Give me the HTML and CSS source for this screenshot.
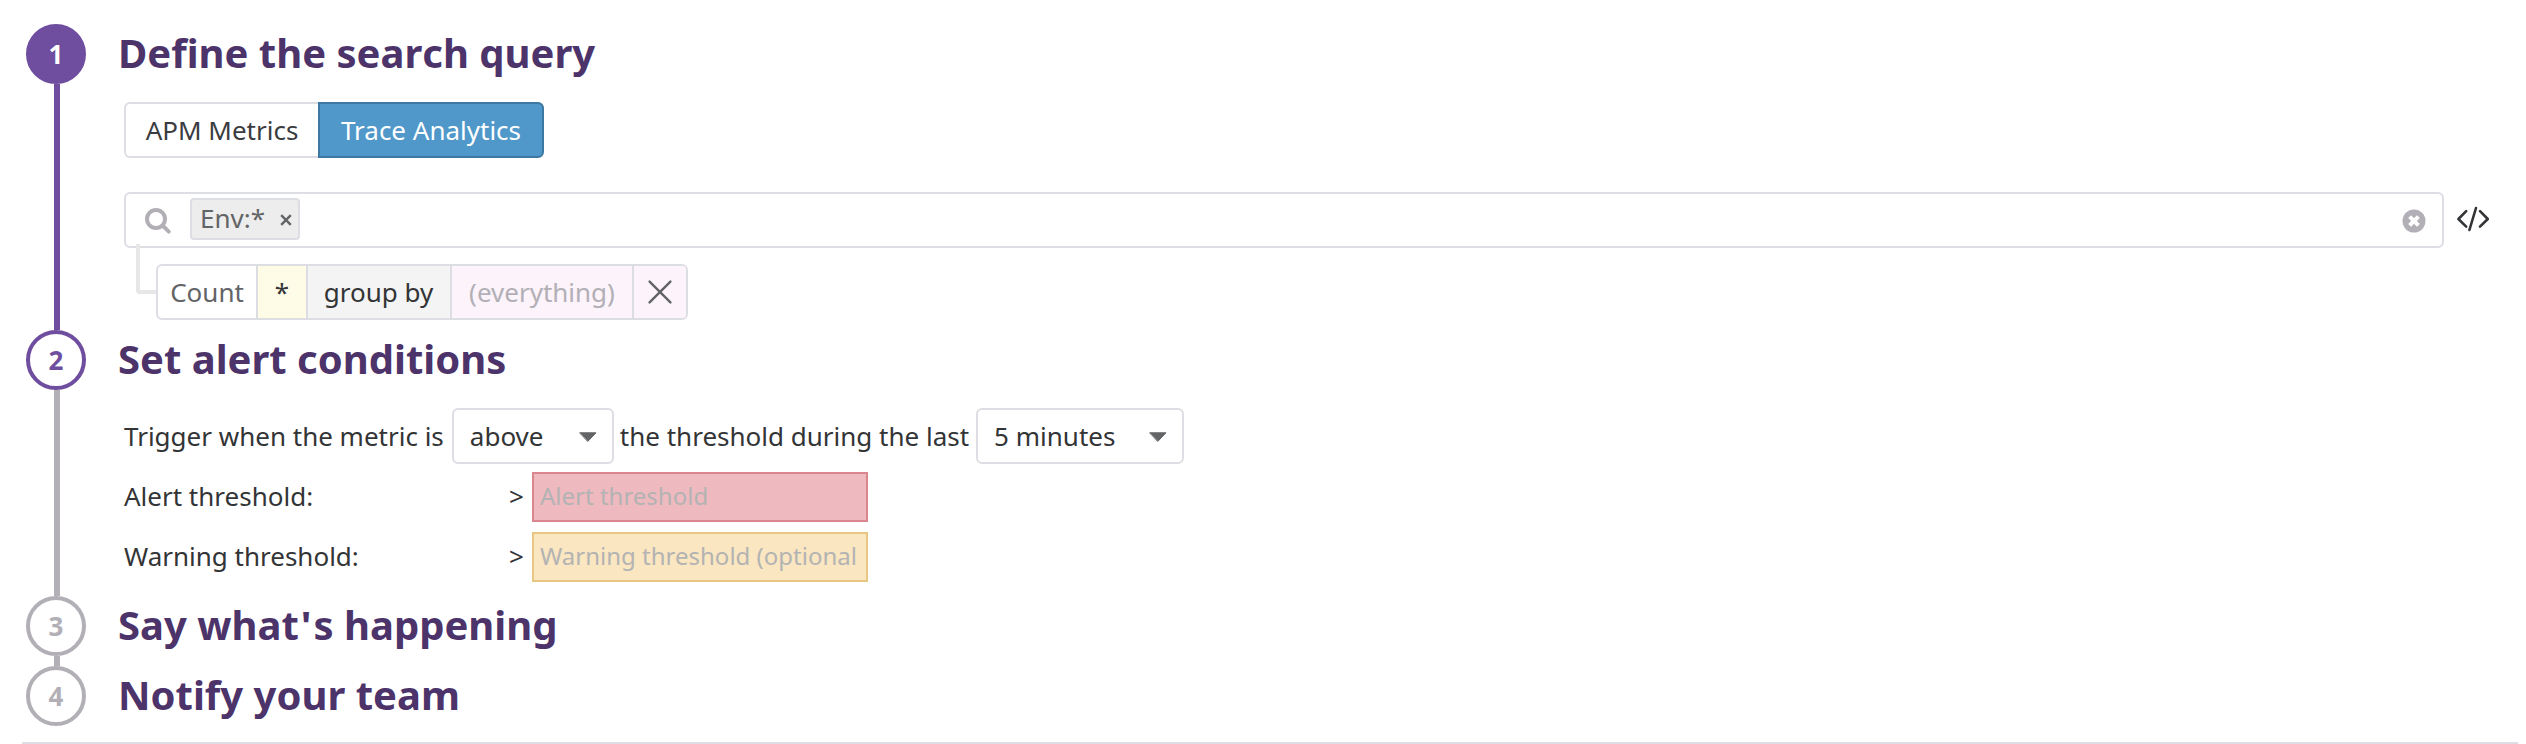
FILE: index.html
```html
<!DOCTYPE html>
<html lang="en">
<head>
<meta charset="utf-8">
<title>New monitor</title>
<link rel="stylesheet" href="styles.css">
</head>
<body>
<main class="monitor-form">
  <section class="step step-query">
    <div class="rail rail-active"><span class="badge badge-filled">1</span></div>
    <div class="content">
      <h2 class="title">Define the search query</h2>
      <div class="tabs">
        <button class="tab">APM Metrics</button>
        <button class="tab tab-selected">Trace Analytics</button>
      </div>
      <div class="search-row">
        <div class="search-box">
          <svg class="search-icon" width="28" height="28" viewBox="0 0 28 28"><circle cx="12" cy="12" r="9"/><path d="M18.8 18.8 24.8 24.6"/></svg>
          <span class="tag"><span class="tag-text">Env:*</span><svg width="12" height="12" viewBox="0 0 12 12"><path d="M1.2 1.2 10.8 10.8M10.8 1.2 1.2 10.8"/></svg></span>
          <svg class="clear-icon" width="24" height="24" viewBox="0 0 24 24"><circle cx="12" cy="12" r="11.5"/><path d="M7.6 7.6 16.4 16.4M16.4 7.6 7.6 16.4"/></svg>
        </div>
        <svg class="code-icon" width="34" height="26" viewBox="0 0 34 26"><path d="M10.2 5.2 2.4 13 10.2 20.6M24 5.2 31.8 13 24 20.6M20 2 13.4 24"/></svg>
      </div>
      <div class="group-row">
        <span class="connector"></span>
        <div class="group-box">
          <span class="cell cell-count">Count</span>
          <span class="cell cell-star">*</span>
          <span class="cell cell-by">group by</span>
          <span class="cell cell-facet">(everything)</span>
          <span class="cell cell-remove"><svg width="24" height="24" viewBox="0 0 24 24"><path d="M1.6 1.6 22.4 22.4M22.4 1.6 1.6 22.4"/></svg></span>
        </div>
      </div>
    </div>
  </section>
  <section class="step step-conditions">
    <div class="rail"><span class="badge badge-active">2</span></div>
    <div class="content">
      <h2 class="title">Set alert conditions</h2>
      <div class="trigger-row">
        <span>Trigger when the metric is</span>
        <span class="select select-operator">above<svg width="18" height="10" viewBox="0 0 18 10"><path d="M1 .8H17L9 9.2Z"/></svg></span>
        <span>the threshold during the last</span>
        <span class="select select-window">5 minutes<svg width="18" height="10" viewBox="0 0 18 10"><path d="M1 .8H17L9 9.2Z"/></svg></span>
      </div>
      <div class="threshold-row">
        <label class="threshold-label" for="alert">Alert threshold:</label>
        <span class="operator">&gt;</span>
        <input class="threshold threshold-alert" id="alert" placeholder="Alert threshold">
      </div>
      <div class="threshold-row">
        <label class="threshold-label" for="warning">Warning threshold:</label>
        <span class="operator">&gt;</span>
        <input class="threshold threshold-warning" id="warning" placeholder="Warning threshold (optional)">
      </div>
    </div>
  </section>
  <section class="step step-message">
    <div class="rail"><span class="badge">3</span></div>
    <div class="content"><h2 class="title">Say what<span class="apostrophe">'</span>s happening</h2></div>
  </section>
  <section class="step step-notify">
    <div class="rail rail-last"><span class="badge">4</span></div>
    <div class="content"><h2 class="title">Notify your team</h2></div>
  </section>
</main>
</body>
</html>
```
FILE: styles.css
```css
* { box-sizing: border-box; }
body {
  margin: 0;
  background: #fff;
  color: #333436;
  font: 26px/36px "Noto Sans", sans-serif;
}
svg { display: block; flex: none; fill: none; stroke-linecap: round; stroke-linejoin: round; }
.monitor-form {
  height: 744px;
  margin: 0 8px 0 22px;
  padding-top: 24px;
  border-bottom: 2px solid #dddde4;
}
.step { display: flex; padding-left: 4px; }
.step-query { height: 306px; }
.step-conditions { height: 266px; }
.step-message { height: 70px; }
.step-notify { height: 60px; }
.rail { width: 60px; display: flex; flex-direction: column; }
.rail::after { content: ""; width: 6px; margin-left: 28px; flex: 1; background: #b2b0b6; }
.rail-active::after { background: #704e9f; }
.rail-last::after { display: none; }
.badge {
  width: 60px;
  height: 60px;
  flex: none;
  border: 4px solid #b2b0b6;
  border-radius: 50%;
  color: #b2b0b6;
  font-weight: 700;
  line-height: 52px;
  text-align: center;
}
.badge-active { border-color: #704e9f; color: #704e9f; }
.badge-filled { border-color: #704e9f; background: #704e9f; color: #fff; }
.content { flex: 1; padding-left: 38px; }
.title {
  margin: 0 0 0 -6px;
  font-size: 40px;
  line-height: 57px;
  font-kerning: none;
  color: #4c336a;
}
.apostrophe { padding: 0 2px; }
.tabs { display: flex; width: 420px; height: 56px; margin-top: 21px; }
.tab {
  height: 56px;
  padding: 0;
  border: 2px solid #dddde4;
  font: inherit;
  color: #3b3c40;
  background: #fff;
}
.tab:first-child { width: 194px; border-right: 0; border-radius: 6px 0 0 6px; }
.tab-selected { flex: 1; border-color: #3c78a2; border-radius: 0 6px 6px 0; background: #4f98c9; color: #fff; }
.search-row { display: flex; align-items: center; margin-top: 34px; }
.search-box {
  width: 2320px;
  height: 56px;
  display: flex;
  align-items: center;
  padding: 0 16px 0 18px;
  border: 2px solid #dddde4;
  border-radius: 6px;
}
.search-icon { stroke: #b2b0b6; stroke-width: 4; margin-top: 2px; }
.tag {
  width: 110px;
  height: 42px;
  display: flex;
  align-items: center;
  margin: -2px auto 0 18px;
  padding-left: 8px;
  border: 2px solid #dddde4;
  border-radius: 4px;
  background: #ededed;
  color: #636466;
}
.tag-text { width: 80px; margin-top: -2px; }
.tag svg { stroke: #636466; stroke-width: 2.4; margin-top: 2px; stroke-linecap: butt; }
.clear-icon { margin-top: 1px; }
.clear-icon circle { fill: #b2b0b6; }
.clear-icon path { stroke: #fff; stroke-width: 4; stroke-linecap: butt; }
.code-icon { margin: -2px 0 0 12px; stroke: #333436; stroke-width: 2.6; }
.group-row { display: flex; margin: -4px 0 0 12px; }
.connector {
  width: 20px;
  height: 50px;
  border: solid #e7e7e8;
  border-width: 0 0 4px 4px;
  border-radius: 0 0 0 4px;
}
.group-box {
  width: 532px;
  height: 56px;
  display: flex;
  margin-top: 20px;
  border: 2px solid #dddde4;
  border-radius: 6px;
  overflow: hidden;
}
.cell { display: flex; align-items: center; justify-content: center; border-left: 2px solid #dddde4; }
.cell-count { width: 98px; border-left: 0; color: #636466; }
.cell-star { width: 50px; background: #fefbe6; }
.cell-by { width: 144px; padding-right: 1px; background: #f4f4f4; }
.cell-facet { width: 182px; background: #fcf3fb; color: #b2b0b6; }
.cell-remove { flex: 1; background: #fcf3fb; }
.cell-remove svg { stroke: #636466; stroke-width: 2.4; }
.trigger-row { display: flex; align-items: center; height: 56px; margin-top: 21px; white-space: pre; }
.select {
  height: 56px;
  display: flex;
  align-items: center;
  justify-content: space-between;
  padding: 0 15px 0 16px;
  border: 2px solid #dddde4;
  border-radius: 6px;
}
.select svg { margin-top: 2px; fill: #636466; stroke: #636466; }
.select-operator { width: 162px; margin: 0 6px 0 8px; }
.select-window { width: 208px; margin-left: 7px; }
.threshold-row { display: flex; align-items: center; height: 50px; margin-top: 8px; }
.threshold-row + .threshold-row { margin-top: 10px; }
.threshold-label { width: 385px; margin-top: -3px; }
.operator { width: 23px; margin-top: -3px; }
.threshold {
  width: 336px;
  height: 50px;
  padding: 0 9px 3px 6px;
  border: 2px solid;
  border-radius: 0;
  font: 24px "Noto Sans", sans-serif;
}
.threshold::placeholder { color: #b3b3b3; opacity: 1; }
.threshold-alert { border-color: #d9868f; background: #efb9c0; }
.threshold-warning { border-color: #e7c781; background: #fae6c0; }
```
